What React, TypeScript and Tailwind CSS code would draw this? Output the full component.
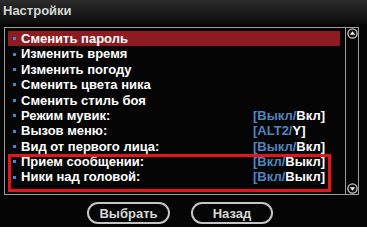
import React from "react";

type Row = { label: string; a?: string; b?: string };

const rows: Row[] = [
  { label: "Сменить пароль" },
  { label: "Изменить время" },
  { label: "Изменить погоду" },
  { label: "Сменить цвета ника" },
  { label: "Сменить стиль боя" },
  { label: "Режим мувик:", a: "[Выкл/", b: "Вкл]" },
  { label: "Вызов меню:", a: "[ALT2/", b: "Y]" },
  { label: "Вид от первого лица:", a: "[Выкл/", b: "Вкл]" },
  { label: "Прием сообщении:", a: "[Вкл/", b: "Выкл]" },
  { label: "Ники над головой:", a: "[Вкл/", b: "Выкл]" },
];

function Arrow({ down }: { down?: boolean }) {
  return (
    <svg width="11" height="11" viewBox="0 0 11 11" className="block">
      <circle cx="5.5" cy="5.5" r="4.6" fill="#111" stroke="#c8c8c8" strokeWidth="1.3" />
      {down ? (
        <path d="M2.8 4.2 L8.2 4.2 L5.5 7.8 Z" fill="#f2f2f2" />
      ) : (
        <path d="M2.8 6.8 L8.2 6.8 L5.5 3.2 Z" fill="#f2f2f2" />
      )}
    </svg>
  );
}

export default function App() {
  return (
    <div
      className="w-[367px] h-[227px] bg-[#050505] overflow-hidden flex flex-col"
      style={{ fontFamily: '"Liberation Sans", Arial, sans-serif' }}
    >
      {/* Title */}
      <div className="h-[24px] bg-gradient-to-b from-[#2c2c2c] to-[#0c0c0c] px-[3px] pt-[4px] text-[13px] font-bold leading-[14px] text-[#d6d6d6]">
        Настройки
      </div>

      {/* List box */}
      <div className="relative ml-[4px] mt-[3px] w-[355px] h-[168px] border border-[#9c9c9c] flex">
        <div className="flex-1 pt-[3px] pl-[3px] pr-[5px]">
          {rows.map((r, i) => (
            <div
              key={r.label}
              className={
                "h-[15.4px] flex items-center text-[13px] font-bold text-white " +
                (i === 0 ? "bg-[#8e1b20]" : "")
              }
            >
              <span className="ml-[5px] w-[3px] h-[3px] bg-[#4a86c8]" />
              <span className="ml-[5px] w-[232px] whitespace-nowrap">{r.label}</span>
              {r.a && (
                <span className="whitespace-nowrap">
                  <span className="text-[#4f86c0]">{r.a}</span>
                  <span className="text-white">{r.b}</span>
                </span>
              )}
            </div>
          ))}
        </div>

        {/* Scrollbar */}
        <div className="w-[13px] border-l border-[#9c9c9c] flex flex-col items-center justify-between py-[0px]">
          <Arrow />
          <Arrow down />
        </div>

        {/* Highlight frame */}
        <div className="absolute left-[3px] top-[126px] w-[323px] h-[38px] border-[3px] border-[#e8141c]" />
      </div>

      {/* Buttons */}
      <div className="flex gap-[21px] ml-[87px] mt-[7px]">
        <button className="w-[83px] h-[22px] rounded-full border-2 border-[#c4c4c4] text-[13px] font-bold text-[#d8d8d8] leading-none">
          Выбрать
        </button>
        <button className="w-[82px] h-[22px] rounded-full border-2 border-[#c4c4c4] text-[13px] font-bold text-[#d8d8d8] leading-none">
          Назад
        </button>
      </div>
    </div>
  );
}
